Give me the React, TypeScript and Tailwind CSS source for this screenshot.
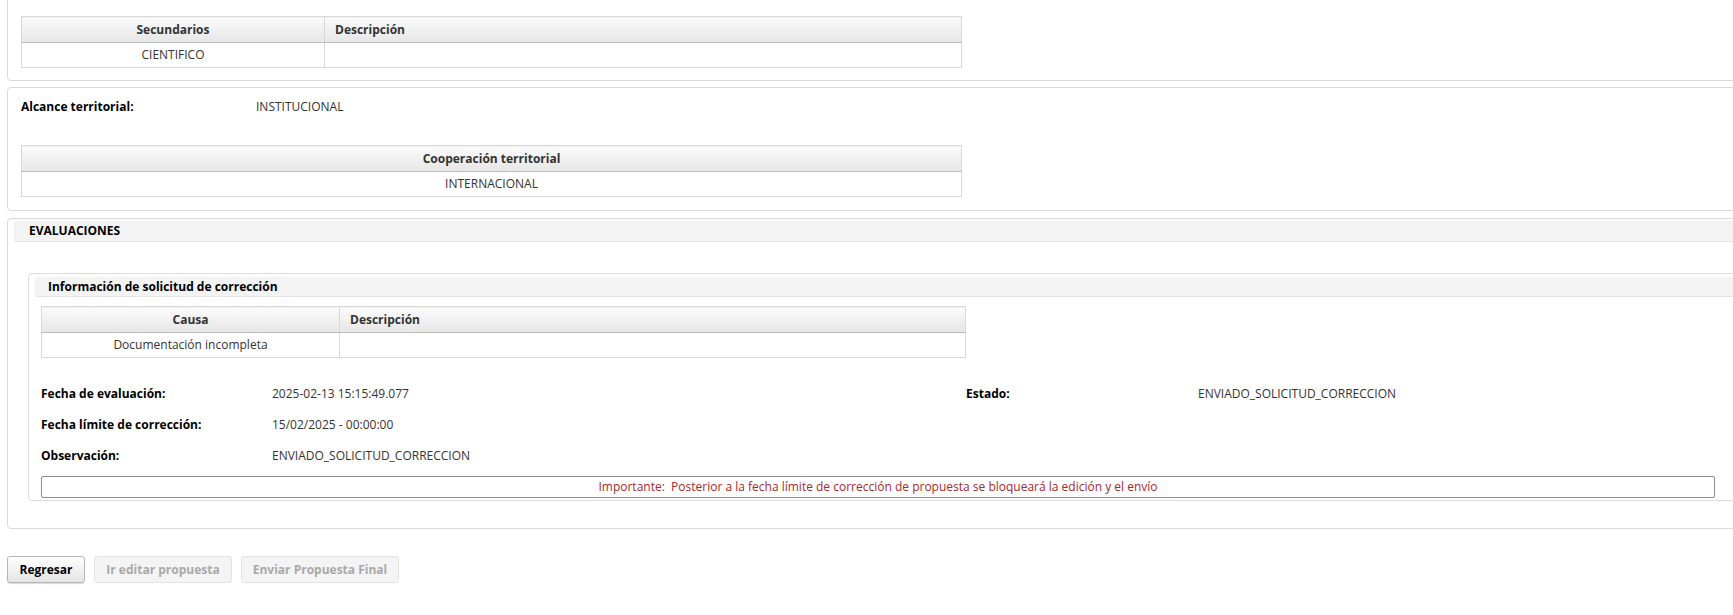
import React from "react";

const font = { fontFamily: '"Open Sans", "Noto Sans", Arial, sans-serif' };

function HeadCell({ children, center, className = "" }: { children?: React.ReactNode; center?: boolean; className?: string }) {
  return (
    <th
      className={`h-[26px] border-b border-b-[#bdbdbd] bg-gradient-to-b from-[#fbfbfb] to-[#e6e6e6] px-[10px] font-bold text-[#333] ${
        center ? "text-center" : "text-left"
      } ${className}`}
    >
      {children}
    </th>
  );
}

function Cell({ children, center, className = "" }: { children?: React.ReactNode; center?: boolean; className?: string }) {
  return (
    <td className={`h-[25px] px-[10px] text-[#333] ${center ? "text-center" : "text-left"} ${className}`}>
      {children}
    </td>
  );
}

function TwoColTable({ w, first, head, value }: { w: string; first: string; head: string; value: string }) {
  return (
    <table className={`${w} border-collapse border border-[#d9d9d9]`}>
      <thead>
        <tr>
          <HeadCell center className={first}>
            {head}
          </HeadCell>
          <HeadCell className="border-l border-l-[#d9d9d9]">Descripción</HeadCell>
        </tr>
      </thead>
      <tbody>
        <tr>
          <Cell center>{value}</Cell>
          <Cell className="border-l border-l-[#d9d9d9]" />
        </tr>
      </tbody>
    </table>
  );
}

function Field({ label, value }: { label: string; value: string }) {
  return (
    <>
      <div className="flex h-[31px] items-center font-bold text-black">{label}</div>
      <div className="flex h-[31px] items-center text-[#333]">{value}</div>
    </>
  );
}

export default function App() {
  return (
    <div className="h-[615px] w-[1733px] overflow-hidden bg-white text-[12px]" style={font}>
      <div className="w-[1790px] pl-[7px]">
        {/* Secundarios */}
        <div className="-mt-[4px] rounded-[4px] border border-[#d9d9d9] px-[13px] pb-[12px] pt-[19px]">
          <TwoColTable w="w-[941px]" first="w-[303px]" head="Secundarios" value="CIENTIFICO" />
        </div>

        {/* Alcance territorial */}
        <div className="mt-[6px] rounded-[4px] border border-[#d9d9d9] px-[13px] pb-[13px] pt-[9px]">
          <div className="flex h-[20px] items-center">
            <span className="w-[235px] font-bold text-black">Alcance territorial:</span>
            <span className="text-[#333]">INSTITUCIONAL</span>
          </div>
          <table className="mt-[28px] w-[941px] border-collapse border border-[#d9d9d9]">
            <thead>
              <tr>
                <HeadCell center>Cooperación territorial</HeadCell>
              </tr>
            </thead>
            <tbody>
              <tr>
                <Cell center>INTERNACIONAL</Cell>
              </tr>
            </tbody>
          </table>
        </div>

        {/* Evaluaciones */}
        <div className="mt-[7px] rounded-[4px] border border-[#d9d9d9] px-[6px] pb-[27px] pt-[2px]">
          <div className="flex h-[21px] items-center rounded-[3px] border-b border-[#e4e4e4] bg-[#f3f3f3] pl-[15px] font-bold text-black">
            EVALUACIONES
          </div>

          <div className="ml-[14px] mt-[31px] rounded-[4px] border border-[#dcdcdc] px-[6px] pb-[2px] pt-[3px]">
            <div className="flex h-[20px] items-center rounded-[3px] border-b border-[#e4e4e4] bg-[#f3f3f3] pl-[13px] font-bold text-black">
              Información de solicitud de corrección
            </div>

            <div className="pl-[6px]">
              <div className="mt-[9px]">
                <TwoColTable w="w-[925px]" first="w-[298px]" head="Causa" value="Documentación incompleta" />
              </div>

              <div className="mt-[20px] grid grid-cols-[231px_694px_232px_1fr]">
                <Field label="Fecha de evaluación:" value="2025-02-13 15:15:49.077" />
                <Field label="Estado:" value="ENVIADO_SOLICITUD_CORRECCION" />
                <Field label="Fecha límite de corrección:" value="15/02/2025 - 00:00:00" />
                <div className="col-span-2" />
                <Field label="Observación:" value="ENVIADO_SOLICITUD_CORRECCION" />
                <div className="col-span-2" />
              </div>

              <div className="mt-[5px] flex h-[22px] w-[1674px] items-center justify-center rounded-[2px] border border-[#8c8a9c] text-[#aa2830]">
                Importante:&nbsp; Posterior a la fecha límite de corrección de propuesta se bloqueará la edición y el envío
              </div>
            </div>
          </div>
        </div>

        {/* Botones */}
        <div className="mt-[27px] flex gap-[9px]">
          <button className="h-[27px] w-[78px] rounded-[3px] border border-[#b5b5b5] bg-gradient-to-b from-white to-[#e4e4e4] font-bold text-black shadow-[0_1px_1px_rgba(0,0,0,0.15)]">
            Regresar
          </button>
          <button disabled className="h-[27px] w-[138px] rounded-[3px] border border-[#e3e3e3] bg-[#f4f4f4] font-bold text-[#a9a9a9]">
            Ir editar propuesta
          </button>
          <button disabled className="h-[27px] w-[158px] rounded-[3px] border border-[#e3e3e3] bg-[#f4f4f4] font-bold text-[#a9a9a9]">
            Enviar Propuesta Final
          </button>
        </div>
      </div>
    </div>
  );
}
